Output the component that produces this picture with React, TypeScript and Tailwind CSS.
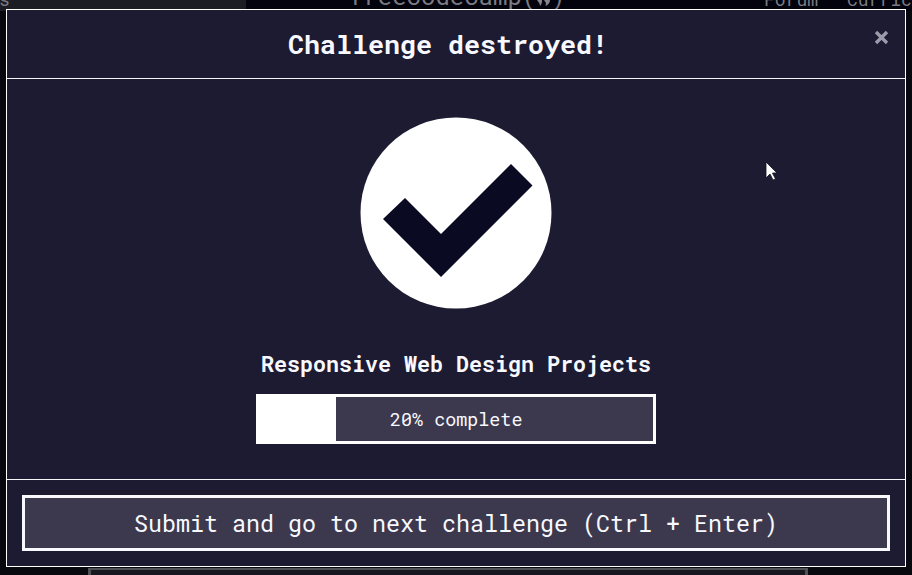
import React from "react";

const mono = "font-['Roboto_Mono','DejaVu_Sans_Mono','Liberation_Mono',monospace]";

function Backdrop() {
  return (
    <div className="flex h-[575px] w-full flex-col justify-between bg-[#08080f]">
      <nav className="relative h-[11px] overflow-hidden bg-[#03030d] text-[#7b7b83]">
        <div className="h-full w-[246px] bg-[#1c1c24]" />
        <span className="absolute left-[-1px] top-[-13px] text-[18px] leading-[24px]">s</span>
        <span className="absolute left-[349px] top-[-19px] text-[24px] leading-[30px]">freeCodeCamp(</span>
        <svg className="absolute left-[536px] top-0" width="16" height="7" viewBox="0 0 16 7" fill="#85858c">
          <path d="M1 0h5c0 2 0 4-2 6L3.500 3.500ZM8 0h6c0 3-2 5-4.500 6L10 3Z" />
        </svg>
        <span className="absolute left-[551px] top-[-19px] text-[24px] leading-[30px]">)</span>
        <span className="absolute left-[764px] top-[-13px] text-[18px] leading-[24px]">Forum</span>
        <span className="absolute left-[847px] top-[-13px] whitespace-nowrap text-[18px] leading-[24px]">Curric</span>
      </nav>
      <div className="ml-[88px] h-[7px] w-[720px] border-x-[3px] border-t-2 border-[#505055] bg-[#17171f]" />
    </div>
  );
}

export default function App() {
  return (
    <div className={`relative h-[575px] w-full overflow-hidden ${mono}`}>
      <Backdrop />
      <section className="absolute left-[6px] top-[9px] flex h-[558px] w-[900px] flex-col border border-white bg-[#1d1b32] text-[#f8f8ff]">
        <header className="relative flex h-[69px] items-start border-b border-[#f5f6f7] pl-[281px] pt-[16px]">
          <h1 className="whitespace-nowrap text-[26.67px] font-bold leading-[36px]">Challenge destroyed!</h1>
          <button aria-label="Close" className="absolute right-[16px] top-[20px] text-[#9c9bac]">
            <svg width="15" height="15" viewBox="0 0 15 15" stroke="currentColor" strokeWidth="3.3">
              <path d="m2 2 11 11M13 2 2 13" />
            </svg>
          </button>
        </header>
        <main className="flex h-[401px] flex-col items-center border-b border-[#f5f6f7] pt-[38px]">
          <svg width="192" height="192" viewBox="0 0 192 192">
            <circle cx="96" cy="96" r="95.5" fill="#fff" />
            <path d="m45 81 36 36 70-70 21.5 21.5-91.5 91.5-58-58Z" fill="#0a0a23" />
          </svg>
          <h2 className="mt-[37px] whitespace-nowrap text-[21.67px] font-bold leading-[36px]">Responsive Web Design Projects</h2>
          <div className="mt-[12px] flex h-[50px] w-[400px] border-[3px] border-white bg-[#3c394e]">
            <div className="w-[77px] bg-white" />
            <span className="ml-[54px] mt-[4px] whitespace-nowrap text-[18.4px] leading-[36px]">20% complete</span>
          </div>
        </main>
        <footer className="flex flex-1 px-[15px] pt-[15px]">
          <button className="flex h-[56px] w-[868px] justify-center whitespace-nowrap border-[3px] border-[#f8f8ff] bg-[#3c394e] pt-[7px] text-[23.33px] leading-[36px]">
            Submit and go to next challenge (Ctrl + Enter)
          </button>
        </footer>
      </section>
      <svg className="absolute left-[765px] top-[161px]" width="13" height="21" viewBox="0 0 13 21">
        <path d="M1 1v16l4-4 3 6 2.500-1-3-6H12Z" fill="#fff" stroke="#111120" strokeWidth=".8" />
      </svg>
    </div>
  );
}
